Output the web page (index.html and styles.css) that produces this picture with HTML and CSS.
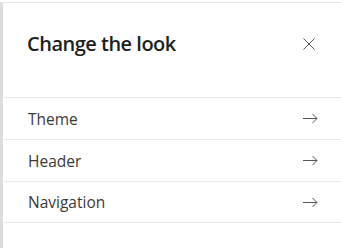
FILE: index.html
```html
<!DOCTYPE html>
<html lang="en">
<head>
<meta charset="utf-8">
<title>Change the look</title>
<link rel="stylesheet" href="styles.css">
</head>
<body>
<div class="panel">
  <div class="panel-header">
    <h1 class="title">Change the look</h1>
    <button class="close" aria-label="Close">
      <svg width="12" height="12" viewBox="0 0 12 12"><path d="M0.5 0.5L11.5 11.5M11.5 0.5L0.5 11.5" stroke="#5a5856" stroke-width="1" fill="none"/></svg>
    </button>
  </div>
  <ul class="menu">
    <li class="menu-item"><span class="label">Theme</span><svg class="arrow" width="15" height="11" viewBox="0 0 15 11"><path d="M0 5.5H14M9.5 1L14 5.5L9.5 10" stroke="#5a5856" stroke-width="1" fill="none"/></svg></li>
    <li class="menu-item"><span class="label">Header</span><svg class="arrow" width="15" height="11" viewBox="0 0 15 11"><path d="M0 5.5H14M9.5 1L14 5.5L9.5 10" stroke="#5a5856" stroke-width="1" fill="none"/></svg></li>
    <li class="menu-item"><span class="label">Navigation</span><svg class="arrow" width="15" height="11" viewBox="0 0 15 11"><path d="M0 5.5H14M9.5 1L14 5.5L9.5 10" stroke="#5a5856" stroke-width="1" fill="none"/></svg></li>
  </ul>
</div>
</body>
</html>
```
FILE: styles.css
```css
html, body {
  margin: 0;
  padding: 0;
  background: #ffffff;
}
body {
  padding-top: 2px;
  font-family: "Open Sans", "Noto Sans", sans-serif;
  height: 249px;
  box-sizing: border-box;
}
.panel {
  border-top: 1px solid #e6e6e6;
  border-left: 3px solid #dcdcdc;
  height: 246px;
  box-sizing: border-box;
}
.panel-header {
  display: flex;
  align-items: flex-start;
  justify-content: space-between;
  height: 94px;
  box-sizing: border-box;
  padding: 27px 26px 0 24px;
}
.title {
  margin: 0;
  font-size: 20px;
  line-height: 28px;
  font-weight: 600;
  letter-spacing: -0.5px;
  color: #201f1e;
}
.close {
  border: 0;
  background: none;
  padding: 0;
  margin-top: 8px;
  width: 12px;
  height: 12px;
  display: flex;
}
.menu {
  list-style: none;
  margin: 0;
  padding: 0;
}
.menu-item {
  display: flex;
  align-items: center;
  justify-content: space-between;
  height: 42px;
  box-sizing: border-box;
  border-top: 1px solid #edebe9;
  padding: 0 23px 0 25px;
}
.menu-item:last-child {
  border-bottom: 1px solid #edebe9;
}
.label {
  font-size: 15.5px;
  line-height: 20px;
  color: #3b3a39;
}
.arrow {
  display: block;
}
```
